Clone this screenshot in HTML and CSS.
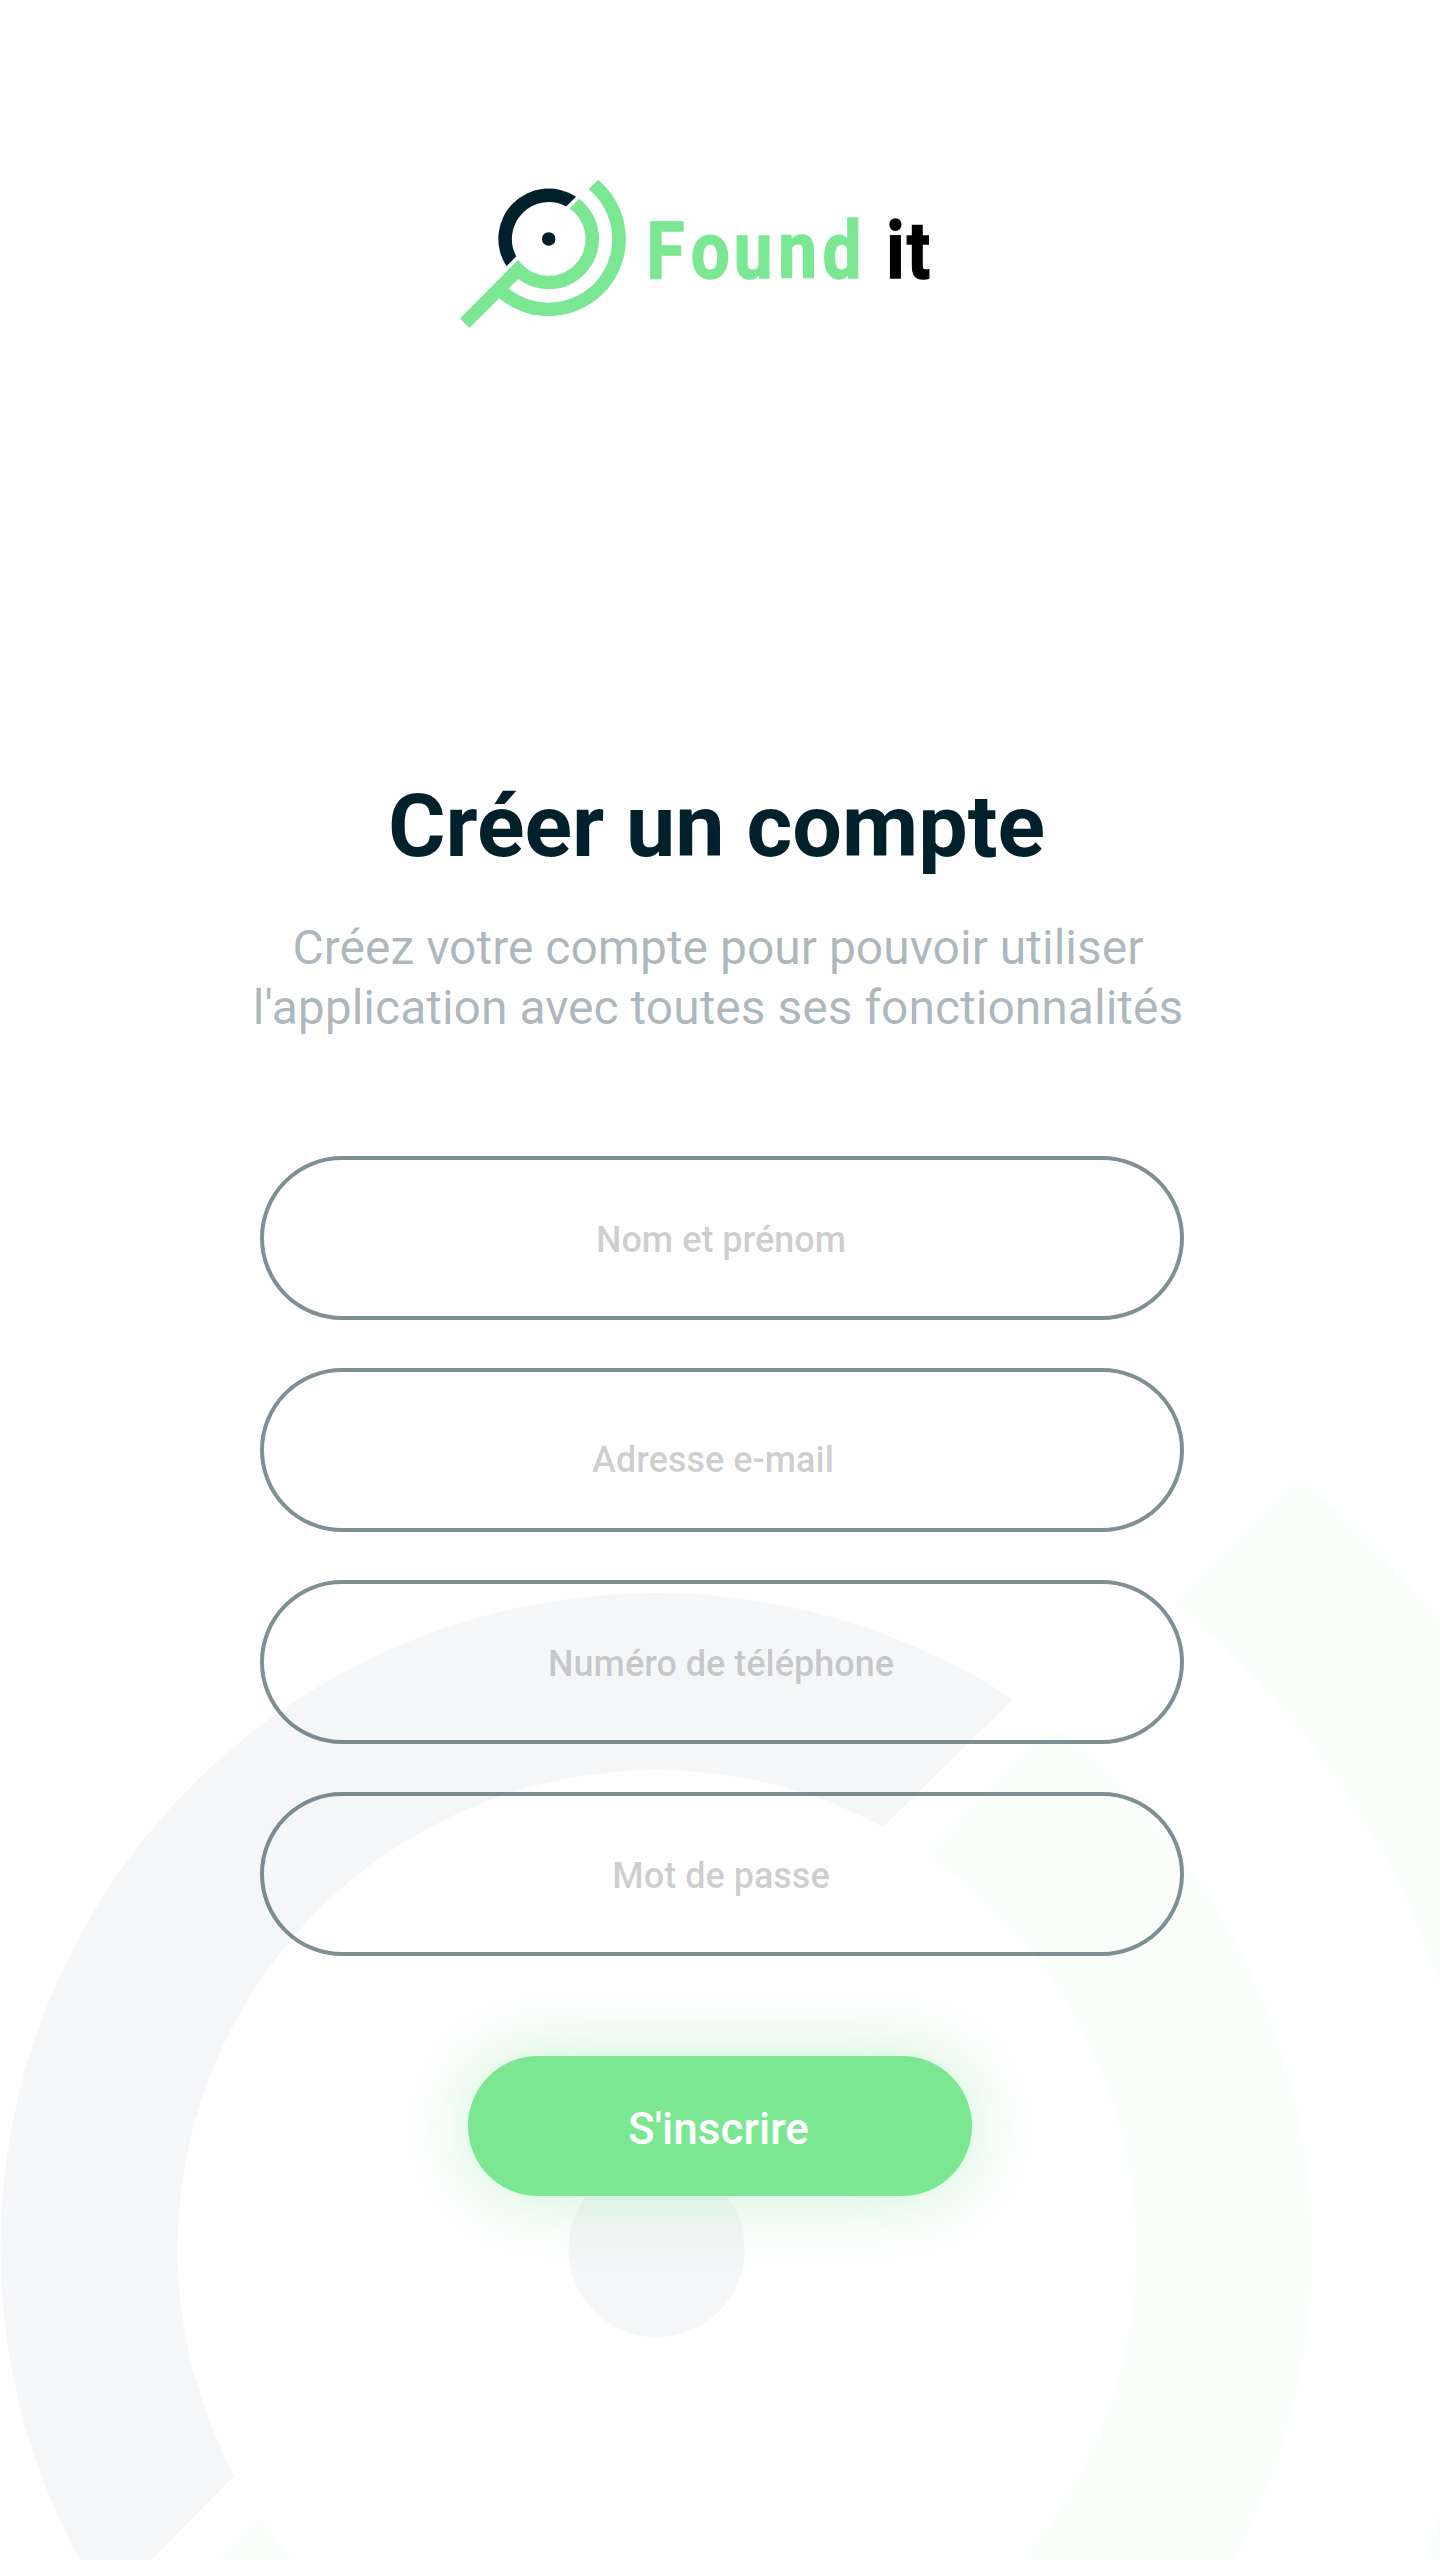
FILE: index.html
```html
<!DOCTYPE html>
<html lang="fr">
<head>
<meta charset="utf-8">
<title>Found it – Créer un compte</title>
<link rel="stylesheet" href="styles.css">
</head>
<body>
<main class="page">
  <svg class="backdrop" viewBox="0 0 1440 2560" aria-hidden="true">
    <defs>
      <path id="mark-dark" d="M82.1-126.8A151 151 0 0 0-126.8 82.1L-97.3 52.3A110.5 110.5 0 0 1 52.3-97.3ZM-20.3 0A20.3 20.3 0 0 0 20.3 0A20.3 20.3 0 0 0-20.3 0Z"/>
      <path id="mark-green" d="M91.4-120.3A151 151 0 0 1-91.4 120.3L-120 149A190.8 190.8 0 0 0 119.5-148.6L148.3-177.4A231.4 231.4 0 0 1-148.5 178L-238 267.5L-266 238.5L-91.2 62.2A110.4 110.4 0 1 0 62.3-91Z"/>
    </defs>
    <g transform="translate(656.5 2249) scale(4.338)">
      <use href="#mark-dark" class="tint-dark"/>
      <use href="#mark-green" class="tint-green"/>
    </g>
  </svg>

  <header class="brand">
    <svg class="logo" width="480" height="160" viewBox="456 176 480 160" role="img" aria-label="Found it">
      <g transform="translate(548.7 238.9) scale(.3333)">
        <use href="#mark-dark" class="dark"/>
        <use href="#mark-green" class="green"/>
      </g>
      <g class="wordmark" transform="translate(646.5 277.5) scale(.87 1)">
        <text class="green" x="0 50.8 100.3 151.4 202.3">Found</text>
        <text class="black" x="275.6 299">it</text>
      </g>
    </svg>
  </header>

  <h1 class="title">Créer un compte</h1>
  <p class="subtitle">Créez votre compte pour pouvoir utiliser<br>l'application avec toutes ses fonctionnalités</p>

  <form class="form">
    <input class="field" type="text" placeholder="Nom et prénom">
    <input class="field field-email" type="email" placeholder="Adresse e-mail">
    <input class="field" type="tel" placeholder="Numéro de téléphone">
    <input class="field" type="password" placeholder="Mot de passe">
    <button class="submit" type="button">S'inscrire</button>
  </form>
</main>
</body>
</html>
```
FILE: styles.css
```css
* {
  box-sizing: border-box;
}

body {
  margin: 0;
  background: #fefefe;
  font-family: Roboto, "Liberation Sans", sans-serif;
}

.page {
  position: relative;
  display: flex;
  flex-direction: column;
  align-items: center;
  width: 1440px;
  height: 2560px;
  padding-top: 176px;
  overflow: hidden;
}

.backdrop {
  position: absolute;
  inset: 0;
  width: 1440px;
  height: 2560px;
  z-index: -1;
}

.tint-dark { fill: #f4f6f8; }
.tint-green { fill: #f9fefa; }
.dark { fill: #00212b; }
.green { fill: #7be792; }
.black { fill: #000; }

.brand {
  width: 528px;
  height: 598px;
}

.logo {
  display: block;
}

.wordmark {
  font-size: 79.5px;
  font-weight: 700;
  stroke-width: 1.4px;
}

.wordmark .green { stroke: #7be792; }
.wordmark .black { stroke: #000; }

.title {
  margin: 0;
  padding-right: 7px;
  color: #00212b;
  font-size: 88px;
  font-weight: 700;
  line-height: 104px;
  white-space: nowrap;
}

.subtitle {
  margin: 40px 0 118px;
  padding-right: 4px;
  color: rgba(0, 33, 43, 0.33);
  font-size: 48px;
  line-height: 60px;
  text-align: center;
  white-space: nowrap;
}

.form {
  display: flex;
  flex-direction: column;
  align-items: center;
  gap: 48px;
  width: 924px;
  margin-left: 4px;
}

.field {
  width: 924px;
  height: 164px;
  padding: 3px 2px 0 0;
  border: 4px solid rgba(0, 33, 43, 0.5);
  border-radius: 82px;
  background: transparent;
  font: 500 36px Roboto, "Liberation Sans", sans-serif;
  text-align: center;
}

.field::placeholder {
  color: rgba(0, 0, 0, 0.2);
  opacity: 1;
}

.field-email {
  padding: 19px 18px 0 0;
}

.submit {
  width: 504px;
  height: 140px;
  margin: 52px 4px 0 0;
  padding: 5px 3px 0 0;
  border: 0;
  border-radius: 70px;
  background: #7be792;
  box-shadow: 0 0 68px rgba(123, 231, 146, 0.4);
  color: #fff;
  font: 500 44px Roboto, "Liberation Sans", sans-serif;
}
```
